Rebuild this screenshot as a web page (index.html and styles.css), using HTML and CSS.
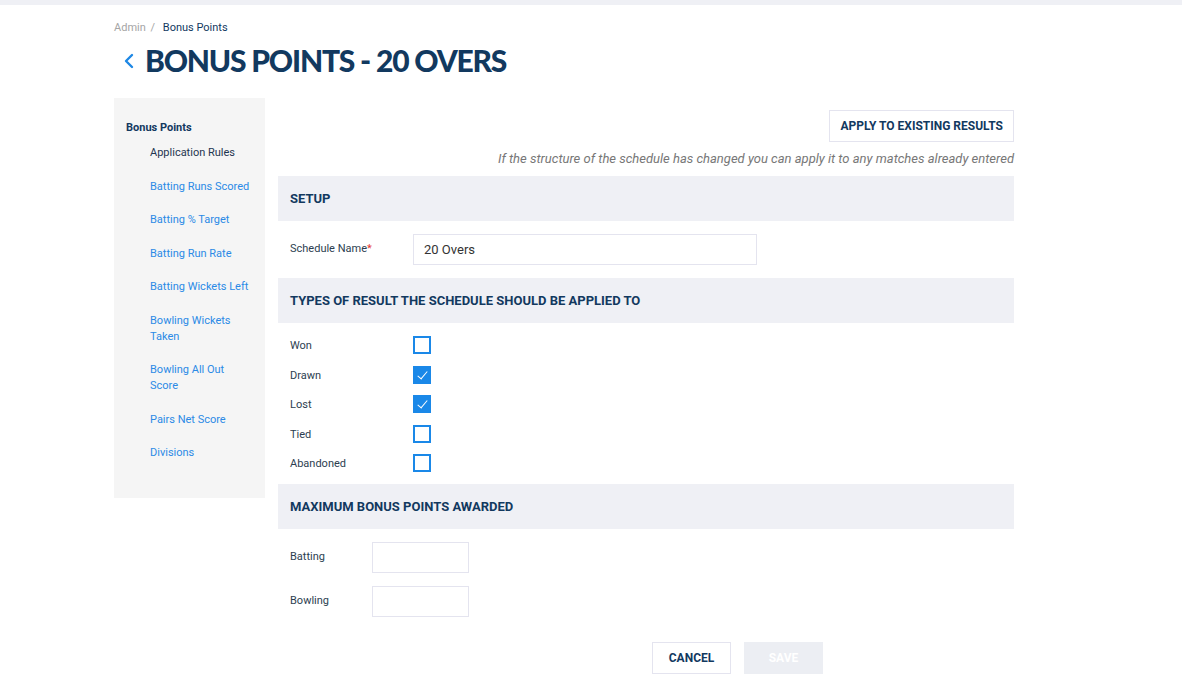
FILE: index.html
```html
<!DOCTYPE html>
<html>
  <head>
    <meta charset="utf-8" />
    <title>Bonus Points - 20 Overs</title>
    <meta name="viewport" content="width=device-width, initial-scale=1" />
    <link rel="stylesheet" href="styles.css">
  </head>
  <body>
    <div class="topbar"></div>
    <div class="page">
      <nav class="breadcrumb">
        <span class="crumb-muted">Admin</span>
        <span class="crumb-sep">/</span>
        <span class="crumb-current">Bonus Points</span>
      </nav>
      <h1 class="page-title">
        <a class="back" href="#">
          <svg width="12" height="16" viewBox="0 0 12 16">
            <path d="M9 2 L3 8 L9 14" fill="none" stroke="#1e88e5" stroke-width="2.4" stroke-linecap="round" stroke-linejoin="round" />
          </svg>
        </a>
        BONUS POINTS - 20 OVERS
      </h1>

      <div class="content">
        <aside class="sidebar">
          <div class="side-heading">Bonus Points</div>
          <ul class="side-menu">
            <li class="active">Application Rules</li>
            <li><a href="#">Batting Runs Scored</a></li>
            <li><a href="#">Batting % Target</a></li>
            <li><a href="#">Batting Run Rate</a></li>
            <li><a href="#">Batting Wickets Left</a></li>
            <li><a href="#">Bowling Wickets<br>Taken</a></li>
            <li><a href="#">Bowling All Out<br>Score</a></li>
            <li><a href="#">Pairs Net Score</a></li>
            <li><a href="#">Divisions</a></li>
          </ul>
        </aside>

        <main class="main">
          <div class="actions">
            <button class="btn">APPLY TO EXISTING RESULTS</button>
          </div>
          <p class="note">If the structure of the schedule has changed you can apply it to any matches already entered</p>

          <div class="section-head">SETUP</div>
          <div class="form-row">
            <label class="label label-wide">Schedule Name<span class="req">*</span></label>
            <input class="input input-name" type="text" value="20 Overs" />
          </div>

          <div class="section-head">TYPES OF RESULT THE SCHEDULE SHOULD BE APPLIED TO</div>
          <div class="checks">
            <div class="check-row"><span class="label label-wide">Won</span><span class="box"></span></div>
            <div class="check-row"><span class="label label-wide">Drawn</span><span class="box checked"></span></div>
            <div class="check-row"><span class="label label-wide">Lost</span><span class="box checked"></span></div>
            <div class="check-row"><span class="label label-wide">Tied</span><span class="box"></span></div>
            <div class="check-row"><span class="label label-wide">Abandoned</span><span class="box"></span></div>
          </div>

          <div class="section-head">MAXIMUM BONUS POINTS AWARDED</div>
          <div class="points">
            <div class="points-row">
              <label class="label label-narrow">Batting</label>
              <input class="input input-small" type="text" />
            </div>
            <div class="points-row">
              <label class="label label-narrow">Bowling</label>
              <input class="input input-small" type="text" />
            </div>
          </div>

          <div class="footer-buttons">
            <button class="btn btn-footer">CANCEL</button>
            <button class="btn btn-footer btn-disabled">SAVE</button>
          </div>
        </main>
      </div>
    </div>
  </body>
</html>
```

FILE: styles.css
```css
body,
html {
  margin: 0;
  padding: 0;
}
body {
  background-color: #fff;
  font-family: Roboto, 'Liberation Sans', sans-serif;
  color: #1f3550;
}

.topbar {
  height: 5px;
  background-color: #eff0f5;
}

.page {
  padding-left: 114px;
  width: 900px;
}

.breadcrumb {
  margin-top: 16px;
  font-size: 11px;
  line-height: 14px;
}
.crumb-muted {
  color: #a5a5a5;
}
.crumb-sep {
  color: #a5a5a5;
  margin: 0 5px 0 2px;
}
.crumb-current {
  color: #12395f;
}

.page-title {
  margin: 5px 0 0 0;
  display: flex;
  align-items: center;
  font-family: Lato, 'Open Sans', sans-serif;
  font-weight: 900;
  font-size: 30px;
  line-height: 40px;
  letter-spacing: -1.2px;
  color: #12395f;
}
.back {
  display: flex;
  margin: 2px 10px 0 9px;
}

.content {
  display: flex;
  align-items: flex-start;
  gap: 13px;
  margin-top: 18px;
}

.sidebar {
  width: 151px;
  background-color: #f5f5f5;
  padding: 23px 0 37px 12px;
  box-sizing: border-box;
  font-size: 11px;
}
.side-heading {
  font-weight: 700;
  line-height: 14px;
  color: #12395f;
}
.side-menu {
  list-style: none;
  margin: 10px 0 0 0;
  padding: 0 0 0 24px;
}
.side-menu li {
  line-height: 16px;
  margin-bottom: 17.5px;
}
.side-menu li:last-child {
  margin-bottom: 0;
}
.side-menu li.active {
  color: #1f3550;
}
.side-menu a {
  color: #2b8ae6;
  text-decoration: none;
}

.main {
  width: 736px;
  display: flex;
  flex-direction: column;
}

.actions {
  display: flex;
  justify-content: flex-end;
  margin-top: 12px;
}
.btn {
  height: 32px;
  padding: 0 10px;
  background-color: #fff;
  border: 1px solid #e4e4ef;
  font-family: Roboto, 'Liberation Sans', sans-serif;
  font-weight: 700;
  font-size: 12px;
  color: #12395f;
}

.note {
  margin: 9px 0 9px 0;
  text-align: right;
  font-size: 13px;
  line-height: 16px;
  font-style: italic;
  color: #777;
}

.section-head {
  height: 45px;
  display: flex;
  align-items: center;
  padding: 0 12px;
  background-color: #eff0f5;
  font-size: 13px;
  font-weight: 700;
  color: #12395f;
}

.label {
  font-size: 11px;
  color: #2c3e50;
  flex-shrink: 0;
}
.label-wide {
  width: 123px;
}
.label-narrow {
  width: 82px;
}
.req {
  color: #e53935;
}

.form-row {
  display: flex;
  align-items: center;
  padding: 13px 12px;
}
.form-row .label {
  margin-top: -3px;
}
.input {
  box-sizing: border-box;
  height: 31px;
  border: 1px solid #e4e4ef;
  padding: 0 10px;
  font-family: Roboto, 'Liberation Sans', sans-serif;
  font-size: 13px;
  color: #333;
  outline: none;
}
.input-name {
  width: 344px;
}
.input-small {
  width: 97px;
}

.checks {
  padding: 8px 12px 5px 12px;
}
.check-row {
  display: flex;
  align-items: center;
  height: 29.5px;
}
.check-row .box {
  margin-top: -1px;
}
.box {
  width: 18px;
  height: 18px;
  box-sizing: border-box;
  border: 2px solid #1a88e8;
  position: relative;
}
.box.checked {
  background-color: #1a88e8;
}
.box.checked::after {
  content: '';
  position: absolute;
  left: 5px;
  top: 1px;
  width: 4px;
  height: 9px;
  border-right: 1px solid #fff;
  border-bottom: 1px solid #fff;
  transform: rotate(40deg);
}

.points {
  padding: 13px 12px 0 12px;
  display: flex;
  flex-direction: column;
  gap: 13px;
}
.points-row {
  display: flex;
  align-items: center;
}
.points-row .label {
  margin-top: -2px;
}

.footer-buttons {
  display: flex;
  gap: 13px;
  margin-top: 25px;
  padding-left: 374px;
}
.btn-footer {
  width: 79px;
  padding: 0;
}
.btn-disabled {
  background-color: #eceef3;
  border-color: #eceef3;
  color: #fff;
}
```
